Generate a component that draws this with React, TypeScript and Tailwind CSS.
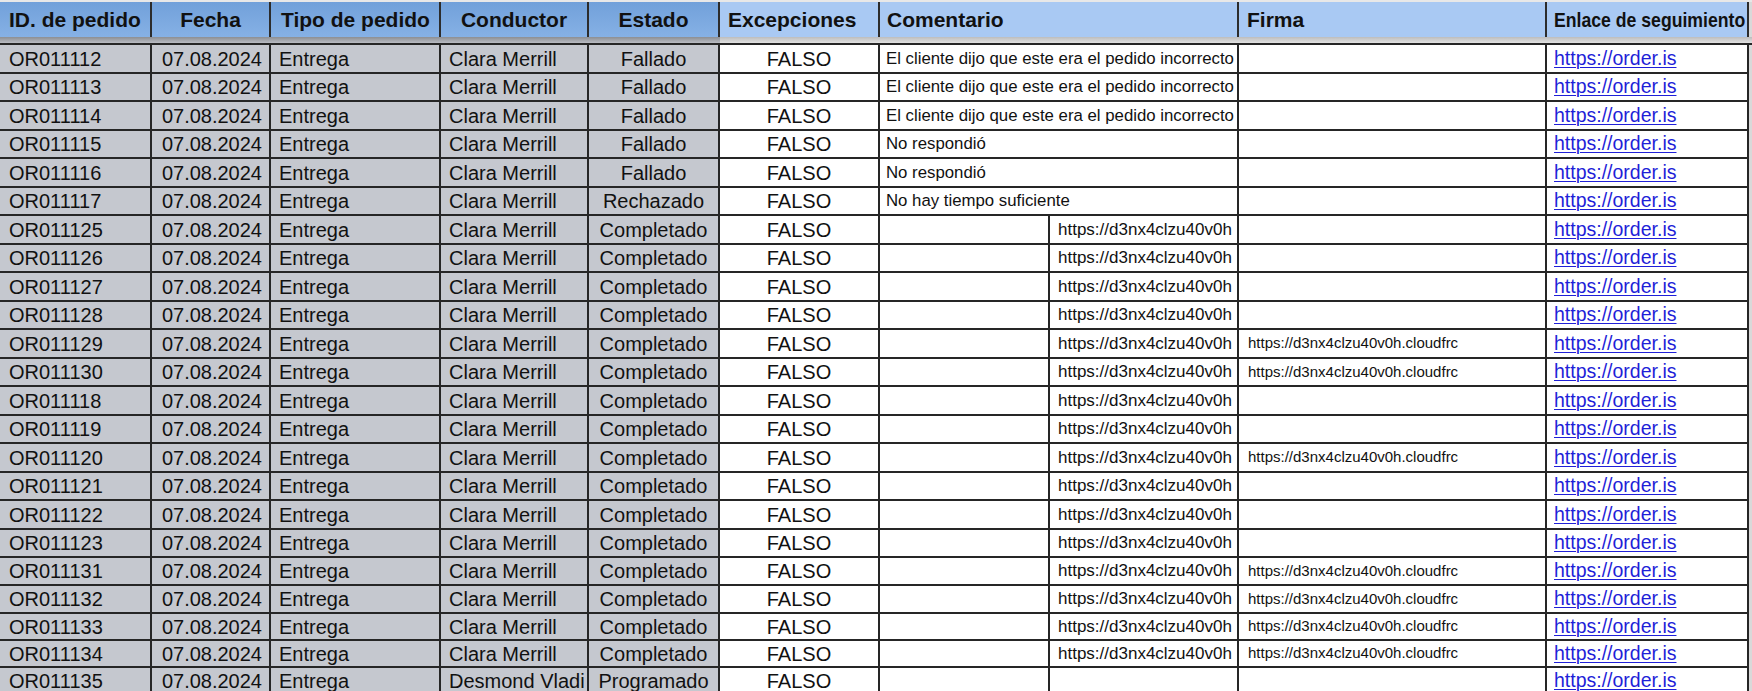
import React from "react";

type Row = {
  id: string;
  estado: string;
  conductor?: string;
  comment?: string;
  h?: boolean;
  i?: boolean;
};

const rows: Row[] = [
  { id: "OR011112", estado: "Fallado", comment: "El cliente dijo que este era el pedido incorrecto" },
  { id: "OR011113", estado: "Fallado", comment: "El cliente dijo que este era el pedido incorrecto" },
  { id: "OR011114", estado: "Fallado", comment: "El cliente dijo que este era el pedido incorrecto" },
  { id: "OR011115", estado: "Fallado", comment: "No respondió" },
  { id: "OR011116", estado: "Fallado", comment: "No respondió" },
  { id: "OR011117", estado: "Rechazado", comment: "No hay tiempo suficiente" },
  { id: "OR011125", estado: "Completado", h: true },
  { id: "OR011126", estado: "Completado", h: true },
  { id: "OR011127", estado: "Completado", h: true },
  { id: "OR011128", estado: "Completado", h: true },
  { id: "OR011129", estado: "Completado", h: true, i: true },
  { id: "OR011130", estado: "Completado", h: true, i: true },
  { id: "OR011118", estado: "Completado", h: true },
  { id: "OR011119", estado: "Completado", h: true },
  { id: "OR011120", estado: "Completado", h: true, i: true },
  { id: "OR011121", estado: "Completado", h: true },
  { id: "OR011122", estado: "Completado", h: true },
  { id: "OR011123", estado: "Completado", h: true },
  { id: "OR011131", estado: "Completado", h: true, i: true },
  { id: "OR011132", estado: "Completado", h: true, i: true },
  { id: "OR011133", estado: "Completado", h: true, i: true },
  { id: "OR011134", estado: "Completado", h: true, i: true },
  { id: "OR011135", estado: "Programado", conductor: "Desmond Vladi" },
];

const grid =
  "grid grid-cols-[152px_119px_170px_148px_131px_160px_170px_189px_308px_202px]";

const gray = "bg-[#c5c8cf]";
const cellBase =
  "flex items-center overflow-hidden whitespace-nowrap border-r-2 border-b-2 border-[#262626]";
const hDark =
  "flex items-center overflow-hidden whitespace-nowrap border-r-2 border-[#2c2c2c] bg-gradient-to-b from-[#71a0da] to-[#86b1e5]";
const hLight =
  "flex items-center overflow-hidden whitespace-nowrap border-r-2 border-[#2c2c2c] bg-[#a9c9f3]";

function rowHeight(idx: number) {
  if (idx < 18) return idx % 2 === 0 ? "h-[29px] grid-rows-[29px]" : "h-[28px] grid-rows-[28px]";
  if (idx < 20) return "h-[28px] grid-rows-[28px]";
  return "h-[27px] grid-rows-[27px]";
}

export default function App() {
  return (
    <div
      className="h-[691px] w-[1752px] overflow-hidden bg-[#d9d9d9]"
      style={{ fontFamily: '"Liberation Sans", Arial, sans-serif' }}
    >
      {/* header */}
      <div className="h-[2px] bg-[#e8e8e8]" />
      <div className={`${grid} h-[35px] grid-rows-[35px] text-[21px] font-bold text-[#111]`}>
        <div className={`${hDark} pl-[9px]`}>ID. de pedido</div>
        <div className={`${hDark} justify-center`}>Fecha</div>
        <div className={`${hDark} pl-[10px]`}>Tipo de pedido</div>
        <div className={`${hDark} justify-center`}>Conductor</div>
        <div className={`${hDark} justify-center`}>Estado</div>
        <div className={`${hLight} pl-[8px]`}>Excepciones</div>
        <div className={`${hLight} col-span-2 pl-[7px]`}>Comentario</div>
        <div className={`${hLight} pl-[8px]`}>Firma</div>
        <div className={`${hLight} pl-[7px]`}>
          <span className="inline-block origin-left scale-x-[0.84]">Enlace de seguimiento</span>
        </div>
      </div>
      {/* shadow band */}
      <div className="flex h-[6px]">
        <div className="h-full w-[720px] bg-gradient-to-b from-[#8c8e93] to-[#b9bcc3]" />
        <div className="h-full w-[1032px] bg-gradient-to-b from-[#bdbdbd] to-[#e2e2e2]" />
      </div>
      {/* rows */}
      <div className="border-t-2 border-[#262626]">
        {rows.map((r, idx) => (
          <div key={r.id} className={`${grid} ${rowHeight(idx)} text-[20px] text-[#111]`}>
            <div className={`${cellBase} ${gray} pl-[9px]`}>{r.id}</div>
            <div className={`${cellBase} ${gray} justify-end pr-[7px]`}>07.08.2024</div>
            <div className={`${cellBase} ${gray} pl-[8px]`}>Entrega</div>
            <div className={`${cellBase} ${gray} pl-[8px]`}>{r.conductor ?? "Clara Merrill"}</div>
            <div className={`${cellBase} ${gray} justify-center`}>{r.estado}</div>
            <div className={`${cellBase} justify-center bg-white`}>FALSO</div>
            {r.comment ? (
              <div className={`${cellBase} col-span-2 bg-white pl-[6px] text-[16.8px]`}>{r.comment}</div>
            ) : (
              <>
                <div className={`${cellBase} bg-white`} />
                <div className={`${cellBase} bg-white pl-[8px] text-[17px]`}>
                  {r.h ? "https://d3nx4clzu40v0h" : ""}
                </div>
              </>
            )}
            <div className={`${cellBase} bg-white pl-[9px] text-[15px]`}>
              {r.i ? "https://d3nx4clzu40v0h.cloudfrc" : ""}
            </div>
            <div className={`${cellBase} bg-white pl-[7px] text-[19.5px]`}>
              <span className="text-[#1f1fd8] underline decoration-1 underline-offset-2">
                https://order.is
              </span>
            </div>
          </div>
        ))}
      </div>
    </div>
  );
}
